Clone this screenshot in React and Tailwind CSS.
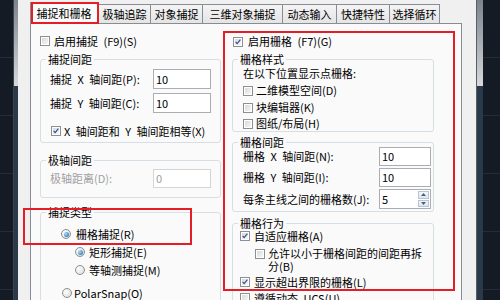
import React from "react";

const Check = ({ checked }) => (
  <span className="w-[10px] h-[10px] shrink-0 border border-[#8e8f8f] bg-white p-px flex">
    <span className="flex-1 bg-[linear-gradient(135deg,#d9d9d9,#f7f7f7)] flex">
      {checked && (
        <svg viewBox="0 0 8 8" className="w-full h-full">
          <path d="M0.8 3.9 L2.9 6.3 L7.2 0.9" stroke="#2b4c98" strokeWidth="1.5" fill="none" />
        </svg>
      )}
    </span>
  </span>
);

const Radio = ({ checked }) => (
  <span className="w-[10px] h-[10px] shrink-0 rounded-full border border-[#8e8f8f] bg-[radial-gradient(circle_at_35%_35%,#ffffff,#d6d6d6)] flex items-center justify-center">
    {checked && (
      <span className="w-[5px] h-[5px] rounded-full bg-[radial-gradient(circle_at_35%_35%,#a6e0ff,#1160ab)]" />
    )}
  </span>
);

const Input = ({ value, w, h, disabled }) => (
  <div
    className={
      "flex items-center px-[2px] bg-white border " +
      (disabled ? "border-[#d4d4d4] text-[#a0a0a0]" : "border-[#abadb3]") +
      " " + w + " " + h
    }
  >
    {value}
  </div>
);

const tabs = [
  ["捕捉和栅格", "w-[68px]", true],
  ["极轴追踪", "w-[52px]"],
  ["对象捕捉", "w-[52px]"],
  ["三维对象捕捉", "w-[80px]"],
  ["动态输入", "w-[54px]"],
  ["快捷特性", "w-[53px]"],
  ["选择循环", "w-[51px]"],
];

const dark =
  "bg-[repeating-linear-gradient(to_bottom,#151b25_0px,#151b25_57px,#242c38_57px,#242c38_58px)]";

export default function App() {
  return (
    <div className="w-[500px] h-[300px] overflow-hidden flex bg-[#f0f0f0] text-black font-['Noto_Sans_CJK_SC',sans-serif] text-[11px] leading-[13px] [word-spacing:3px]">
      <div className={"w-[13px] h-full " + dark} />
      <div className="w-[5px] h-full flex flex-col border-l border-[#3b424c]">
        <div className="h-[86px] bg-[linear-gradient(to_bottom,#7c838c,#d6d9dd)]" />
        <div className="flex-1 bg-[#2a3a4b]" />
      </div>

      <div className="relative w-[458px] h-full pl-[12px]">
        <div className="flex items-end h-[23px]">
          {tabs.map(([t, w, sel], i) => (
            <div
              key={t}
              className={
                "flex items-center justify-center border-t border-l border-[#898c95] " +
                w + " " +
                (i === tabs.length - 1 ? "border-r " : "") +
                (sel
                  ? "h-[22px] bg-[#fafafa] relative z-10 -mb-px border-r"
                  : "h-[19px] bg-[linear-gradient(to_bottom,#f4f4f4,#e4e4e4)]")
              }
            >
              {t}
            </div>
          ))}
        </div>

        <div className="w-[432px] h-[290px] border border-[#898c95] bg-[#fafafa] flex gap-[11px] pl-[9px] pt-[9px]">
          {/* left column */}
          <div className="w-[181px] flex flex-col">
            <div className="h-[17px] flex items-center gap-[4px]">
              <Check />
              <span>启用捕捉 (F9)(S)</span>
            </div>

            <fieldset className="mt-[5px] border border-[#d5dfe5] rounded-[3px] p-0 pb-[3px]">
              <legend className="ml-[5px] px-[2px] leading-[10px]">捕捉间距</legend>
              <div className="px-[9px] flex flex-col">
                <div className="mt-[5px] h-[20px] flex items-center justify-between">
                  <span>捕捉 X 轴间距(P):</span>
                  <Input value="10" w="w-[58px]" h="h-[20px]" />
                </div>
                <div className="mt-[4px] h-[20px] flex items-center justify-between">
                  <span>捕捉 Y 轴间距(C):</span>
                  <Input value="10" w="w-[58px]" h="h-[20px]" />
                </div>
                <div className="mt-[10px] h-[16px] flex items-center gap-[3px] ml-px">
                  <Check checked />
                  <span>X 轴间距和 Y 轴间距相等(X)</span>
                </div>
              </div>
            </fieldset>

            <fieldset className="mt-[12px] border border-[#d5dfe5] rounded-[3px] p-0 pb-[9px]">
              <legend className="ml-[5px] px-[2px] leading-[10px]">极轴间距</legend>
              <div className="px-[9px]">
                <div className="mt-[4px] h-[19px] flex items-center justify-between">
                  <span className="text-[#a0a0a0]">极轴距离(D):</span>
                  <Input value="0" w="w-[58px]" h="h-[19px]" disabled />
                </div>
              </div>
            </fieldset>

            <fieldset className="mt-[9px] border border-[#d5dfe5] rounded-[3px] p-0 pb-[10px]">
              <legend className="ml-[5px] px-[2px] leading-[10px]">捕捉类型</legend>
              <div className="flex flex-col">
                <div className="mt-[9px] h-[16px] flex items-center gap-[5px] pl-[20px]">
                  <Radio checked />
                  <span>栅格捕捉(R)</span>
                </div>
                <div className="mt-[2px] h-[16px] flex items-center gap-[4px] pl-[34px]">
                  <Radio checked />
                  <span>矩形捕捉(E)</span>
                </div>
                <div className="mt-[2px] h-[16px] flex items-center gap-[4px] pl-[34px]">
                  <Radio />
                  <span>等轴测捕捉(M)</span>
                </div>
                <div className="mt-[7px] h-[16px] flex items-center gap-[2px] pl-[21px]">
                  <Radio />
                  <span>PolarSnap(O)</span>
                </div>
              </div>
            </fieldset>
          </div>

          {/* right column */}
          <div className="w-[202px] flex flex-col">
            <div className="h-[17px] flex items-center gap-[5px] ml-px">
              <Check checked />
              <span>启用栅格 (F7)(G)</span>
            </div>

            <fieldset className="mt-[4px] border border-[#d5dfe5] rounded-[3px] p-0">
              <legend className="ml-[5px] px-[2px] leading-[10px]">栅格样式</legend>
              <div className="pl-[10px] flex flex-col">
                <div className="mt-px h-[17px] flex items-center">在以下位置显示点栅格:</div>
                <div className="h-[17px] flex items-center gap-[3px]">
                  <Check />
                  <span>二维模型空间(D)</span>
                </div>
                <div className="h-[17px] flex items-center gap-[3px]">
                  <Check />
                  <span>块编辑器(K)</span>
                </div>
                <div className="h-[15px] flex items-center gap-[3px]">
                  <Check />
                  <span>图纸/布局(H)</span>
                </div>
              </div>
            </fieldset>

            <fieldset className="mt-[5px] border border-[#d5dfe5] rounded-[3px] p-0 pb-[2px]">
              <legend className="ml-[5px] px-[2px] leading-[10px]">栅格间距</legend>
              <div className="pl-[10px] pr-[2px] flex flex-col">
                <div className="h-[19px] flex items-center justify-between">
                  <span>栅格 X 轴间距(N):</span>
                  <Input value="10" w="w-[52px]" h="h-[19px]" />
                </div>
                <div className="mt-[2px] h-[19px] flex items-center justify-between">
                  <span>栅格 Y 轴间距(I):</span>
                  <Input value="10" w="w-[52px]" h="h-[19px]" />
                </div>
                <div className="mt-[2px] h-[20px] flex items-center justify-between">
                  <span>每条主线之间的栅格数(J):</span>
                  <div className="w-[52px] h-[20px] border border-[#abadb3] bg-white flex">
                    <span className="flex-1 pl-[2px] flex items-center">5</span>
                    <div className="w-[13px] flex flex-col p-px gap-px">
                      <div className="flex-1 border border-[#b8c4d4] bg-[linear-gradient(to_bottom,#f4f7fb,#dde5ef)] flex items-center justify-center">
                        <svg width="5" height="3" viewBox="0 0 5 3"><path d="M0 3 L2.5 0 L5 3 Z" fill="#4a5f86" /></svg>
                      </div>
                      <div className="flex-1 border border-[#b8c4d4] bg-[linear-gradient(to_bottom,#f4f7fb,#dde5ef)] flex items-center justify-center">
                        <svg width="5" height="3" viewBox="0 0 5 3"><path d="M0 0 L2.5 3 L5 0 Z" fill="#4a5f86" /></svg>
                      </div>
                    </div>
                  </div>
                </div>
              </div>
            </fieldset>

            <fieldset className="mt-[6px] border border-[#d5dfe5] rounded-[3px] p-0">
              <legend className="ml-[5px] px-[2px] leading-[10px]">栅格行为</legend>
              <div className="pl-[7px] flex flex-col">
                <div className="h-[16px] flex items-center gap-[4px]">
                  <Check checked />
                  <span>自适应栅格(A)</span>
                </div>
                <div className="mt-px h-[29px] pt-[1.5px] pl-[15px] flex items-start gap-[3px]">
                  <span className="mt-[2px] flex"><Check /></span>
                  <span className="leading-[13px]">
                    允许以小于栅格间距的间距再拆
                    <br />
                    分(B)
                  </span>
                </div>
                <div className="h-[16px] flex items-center gap-[4px]">
                  <Check checked />
                  <span>显示超出界限的栅格(L)</span>
                </div>
                <div className="h-[16px] flex items-center gap-[4px]">
                  <Check />
                  <span>遵循动态 UCS(U)</span>
                </div>
              </div>
            </fieldset>
          </div>
        </div>

        {/* red annotation boxes */}
        <div className="absolute left-[13px] top-[2px] w-[68px] h-[22px] border-2 border-[#e51e25] z-20" />
        <div className="absolute left-[205px] top-[31px] w-[232px] h-[260px] border-2 border-[#e51e25] z-20" />
        <div className="absolute left-[5px] top-[208px] w-[169px] h-[37px] border-2 border-[#e51e25] z-20" />
      </div>

      <div className="w-[7px] h-full flex flex-col border-l border-[#5a5f66]">
        <div className="h-[86px] bg-[linear-gradient(to_bottom,#7c838c,#d6d9dd)]" />
        <div className="flex-1 bg-[#2a3a4b]" />
      </div>
      <div className={"w-[17px] h-full " + dark} />
    </div>
  );
}
